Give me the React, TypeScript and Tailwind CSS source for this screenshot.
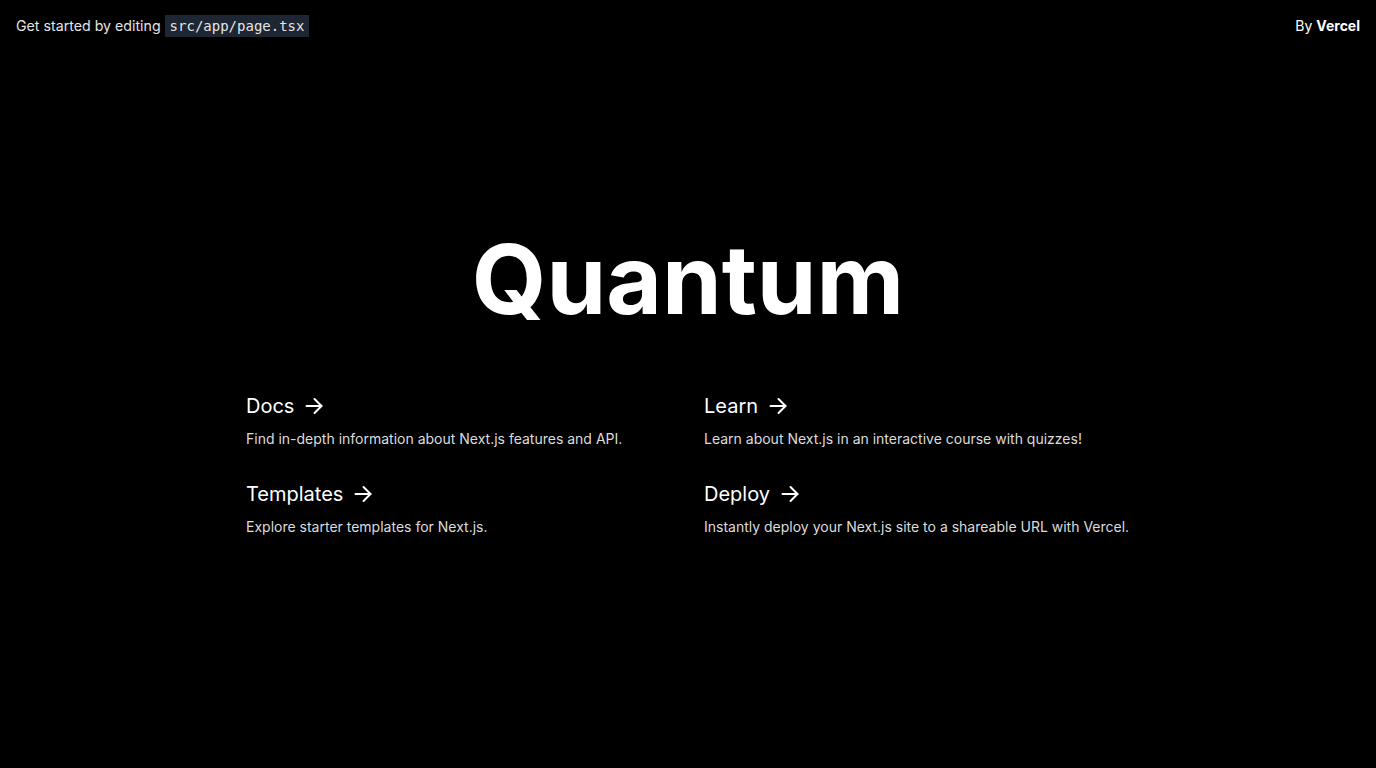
import React from "react";

const Arrow = () => (
  <svg width="18" height="18" viewBox="0 0 18 18" fill="none" stroke="currentColor" strokeWidth="2" strokeLinecap="round" strokeLinejoin="round" className="inline-block">
    <path d="M1.5 9h15" />
    <path d="M9.5 2l7 7-7 7" />
  </svg>
);

const cards = [
  { title: "Docs", desc: "Find in-depth information about Next.js features and API." },
  { title: "Learn", desc: "Learn about Next.js in an interactive course with quizzes!" },
  { title: "Templates", desc: "Explore starter templates for Next.js." },
  { title: "Deploy", desc: "Instantly deploy your Next.js site to a shareable URL with Vercel." },
];

export default function App() {
  return (
    <div
      className="min-h-[768px] w-full bg-black text-white flex flex-col"
      style={{ fontFamily: "Inter, 'Noto Sans', sans-serif" }}
    >
      <header className="flex items-center justify-between px-4 pt-[15px] h-[37px] text-sm">
        <p className="flex items-center text-[#e5e5e5] text-[14.2px]">
          Get started by editing&nbsp;
          <code
            className="bg-[#1e2533] px-[5px] h-[22px] flex items-center text-[14px] text-[#e5e5e5]"
            style={{ fontFamily: "'DejaVu Sans Mono', monospace" }}
          >
            src/app/page.tsx
          </code>
        </p>
        <p className="text-white">
          By <span className="font-bold">Vercel</span>
        </p>
      </header>
      <main className="flex flex-col items-center">
        <h1 className="mt-[194px] text-8xl font-bold leading-none tracking-normal text-white">Quantum</h1>
        <div className="mt-[65px] grid grid-cols-2 w-[916px] gap-y-[31px]">
          {cards.map((c) => (
            <div key={c.title} className="px-4">
              <h2 className="text-xl flex items-center gap-[11px] leading-7 text-white">
                {c.title}
                <Arrow />
              </h2>
              <p className="mt-[9px] text-sm text-[#dcdcdc] leading-5">{c.desc}</p>
            </div>
          ))}
        </div>
      </main>
    </div>
  );
}
